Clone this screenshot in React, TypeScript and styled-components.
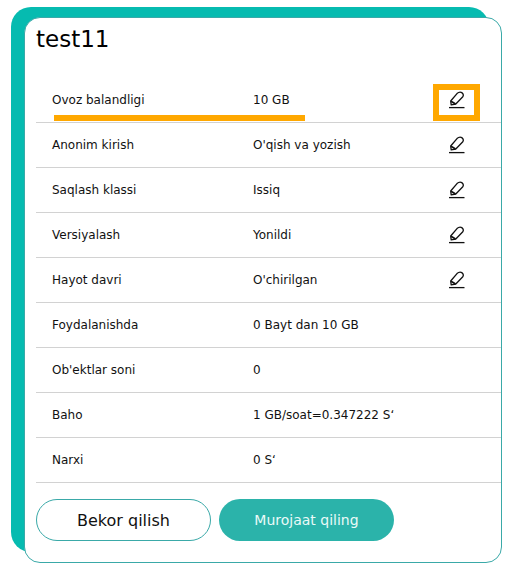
import React from 'react';
import styled, { createGlobalStyle } from 'styled-components';

const GlobalStyle = createGlobalStyle`
  body {
    margin: 0;
    background: #fff;
    font-family: "DejaVu Sans", Verdana, sans-serif;
    color: #111;
  }
`;

const Shell = styled.div`
  position: relative;
  box-sizing: border-box;
  width: 478px;
  height: 546px;
  margin: 17px 0 0 24px;
  padding: 0 0 0 11px;
  background: #fff;
  border: 1px solid #3aa9a8;
  border-radius: 16px;

  &::before {
    content: '';
    position: absolute;
    z-index: -1;
    left: -14px;
    top: -11px;
    width: 478px;
    height: 545px;
    background: #06bbb0;
    border-radius: 20px;
  }
`;

const Title = styled.h1`
  margin: 0;
  height: 60px;
  padding-top: 6px;
  box-sizing: border-box;
  font-size: 23px;
  line-height: 30px;
  font-weight: 400;
  color: #000;
`;

const Rows = styled.div`
  display: flex;
  flex-direction: column;
`;

const Row = styled.div`
  display: grid;
  grid-template-columns: 201px 1fr 16px;
  align-items: center;
  box-sizing: border-box;
  height: 45px;
  padding: 0 36px 0 16px;
  border-bottom: 1px solid #d2d2d2;
  font-size: 12px;
`;

const EditIcon = styled.svg`
  display: block;
  width: 16px;
  height: 18px;
`;

const Actions = styled.div`
  display: flex;
  gap: 8px;
  margin-top: 16px;
`;

const Button = styled.button<{ $primary?: boolean }>`
  box-sizing: border-box;
  width: 175px;
  height: 42px;
  border-radius: 21px;
  border: ${p => (p.$primary ? 'none' : '1px solid #3aa9a8')};
  background: ${p => (p.$primary ? '#2bb3aa' : '#fff')};
  color: ${p => (p.$primary ? '#eafaf8' : '#111')};
  font-family: inherit;
  font-size: ${p => (p.$primary ? '14px' : '16px')};
  padding: 0;
`;

const Underline = styled.div`
  position: absolute;
  left: 29px;
  top: 97px;
  width: 251px;
  height: 6px;
  background: #ffa800;
`;

const IconMark = styled.div`
  position: absolute;
  left: 408px;
  top: 66px;
  width: 35px;
  height: 25px;
  border: 6px solid #ffa800;
`;

const Pencil = () => (
  <EditIcon viewBox="0 0 16 18" fill="none" stroke="#111" strokeWidth="1.3">
    <path
      d="M2.2 13.8 L1.7 10 L8 2.6 Q10.4 0.4 12.8 1.6 Q15.2 3.3 13.8 5.8 L6.8 13 Z"
      strokeLinejoin="round"
    />
    <path d="M2 10.2 L6.6 13" strokeWidth="1.6" />
    <path d="M0 16.6 H15.5" />
  </EditIcon>
);

const rows: { label: string; value: string; editable?: boolean }[] = [
  { label: 'Ovoz balandligi', value: '10 GB', editable: true },
  { label: 'Anonim kirish', value: "O'qish va yozish", editable: true },
  { label: 'Saqlash klassi', value: 'Issiq', editable: true },
  { label: 'Versiyalash', value: 'Yonildi', editable: true },
  { label: 'Hayot davri', value: "O'chirilgan", editable: true },
  { label: 'Foydalanishda', value: '0 Bayt dan 10 GB' },
  { label: "Ob'ektlar soni", value: '0' },
  { label: 'Baho', value: '1 GB/soat=0.347222 S\u02BB' },
  { label: 'Narxi', value: '0 S\u02BB' },
];

const App: React.FC = () => (
  <>
    <GlobalStyle />
    <Shell>
      <Title>test11</Title>
      <Rows>
        {rows.map(r => (
          <Row key={r.label}>
            <span>{r.label}</span>
            <span>{r.value}</span>
            {r.editable ? <Pencil /> : <span />}
          </Row>
        ))}
      </Rows>
      <Actions>
        <Button>Bekor qilish</Button>
        <Button $primary>Murojaat qiling</Button>
      </Actions>
      <Underline />
      <IconMark />
    </Shell>
  </>
);

export default App;
